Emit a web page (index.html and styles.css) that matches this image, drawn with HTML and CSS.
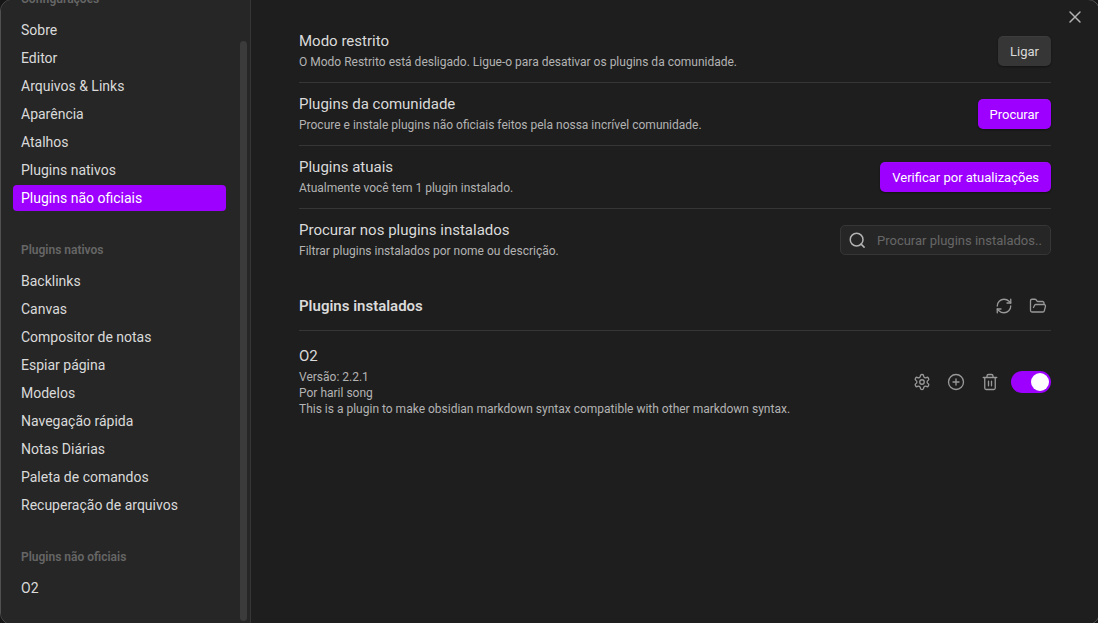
FILE: index.html
```html
<!DOCTYPE html>
<html lang="pt-BR">
<head>
<meta charset="utf-8">
<title>Configurações</title>
<link rel="stylesheet" href="styles.css">
</head>
<body>
<div class="modal">
  <nav class="sidebar">
    <section class="nav-group">
      <h2 class="nav-title">Configurações</h2>
      <a class="nav-item" href="#">Sobre</a>
      <a class="nav-item" href="#">Editor</a>
      <a class="nav-item" href="#">Arquivos &amp; Links</a>
      <a class="nav-item" href="#">Aparência</a>
      <a class="nav-item" href="#">Atalhos</a>
      <a class="nav-item" href="#">Plugins nativos</a>
      <a class="nav-item is-active" href="#" aria-current="page">Plugins não oficiais</a>
    </section>
    <section class="nav-group">
      <h2 class="nav-title">Plugins nativos</h2>
      <a class="nav-item" href="#">Backlinks</a>
      <a class="nav-item" href="#">Canvas</a>
      <a class="nav-item" href="#">Compositor de notas</a>
      <a class="nav-item" href="#">Espiar página</a>
      <a class="nav-item" href="#">Modelos</a>
      <a class="nav-item" href="#">Navegação rápida</a>
      <a class="nav-item" href="#">Notas Diárias</a>
      <a class="nav-item" href="#">Paleta de comandos</a>
      <a class="nav-item" href="#">Recuperação de arquivos</a>
    </section>
    <section class="nav-group">
      <h2 class="nav-title">Plugins não oficiais</h2>
      <a class="nav-item" href="#">O2</a>
    </section>
    <div class="scroll-thumb"></div>
  </nav>

  <main class="content">
    <div class="setting">
      <div class="info">
        <div class="name">Modo restrito</div>
        <div class="desc">O Modo Restrito está desligado. Ligue-o para desativar os plugins da comunidade.</div>
      </div>
      <button class="btn" type="button">Ligar</button>
    </div>
    <div class="setting">
      <div class="info">
        <div class="name">Plugins da comunidade</div>
        <div class="desc">Procure e instale plugins não oficiais feitos pela nossa incrível comunidade.</div>
      </div>
      <button class="btn btn-cta" type="button">Procurar</button>
    </div>
    <div class="setting">
      <div class="info">
        <div class="name">Plugins atuais</div>
        <div class="desc">Atualmente você tem 1 plugin instalado.</div>
      </div>
      <button class="btn btn-cta" type="button">Verificar por atualizações</button>
    </div>
    <div class="setting">
      <div class="info">
        <label class="name" for="search">Procurar nos plugins instalados</label>
        <div class="desc">Filtrar plugins instalados por nome ou descrição.</div>
      </div>
      <div class="search">
        <svg class="icon search-icon" viewBox="0 0 24 24"><circle cx="11.500" cy="11.500" r="8.500"/><path d="m21.500 21.500-4-4"/></svg>
        <input class="search-input" id="search" type="text" placeholder="Procurar plugins instalados...">
      </div>
    </div>

    <div class="heading">
      <h1 class="heading-title">Plugins instalados</h1>
      <div class="controls">
        <button class="icon-btn" type="button" aria-label="Recarregar plugins">
          <svg class="icon" viewBox="0 0 24 24"><path d="M3 12a9 9 0 0 1 9-9 9.75 9.75 0 0 1 6.74 2.74L21 8"/><path d="M21 3v5h-5"/><path d="M21 12a9 9 0 0 1-9 9 9.75 9.75 0 0 1-6.74-2.74L3 16"/><path d="M8 16H3v5"/></svg>
        </button>
        <button class="icon-btn" type="button" aria-label="Abrir pasta de plugins">
          <svg class="icon" viewBox="0 0 24 24"><path d="m6 14 1.45-2.9A2 2 0 0 1 9.24 10H20a2 2 0 0 1 1.94 2.5l-1.55 6a2 2 0 0 1-1.94 1.5H4a2 2 0 0 1-2-2V5c0-1.1.9-2 2-2h3.93a2 2 0 0 1 1.66.9l.82 1.2a2 2 0 0 0 1.66.9H18a2 2 0 0 1 2 2v2"/></svg>
        </button>
      </div>
    </div>

    <div class="setting plugin">
      <div class="info">
        <label class="name" for="o2-enabled">O2</label>
        <div class="desc">
          <div>Versão: 2.2.1</div>
          <div>Por haril song</div>
          <div>This is a plugin to make obsidian markdown syntax compatible with other markdown syntax.</div>
        </div>
      </div>
      <div class="controls">
        <button class="icon-btn" type="button" aria-label="Opções">
          <svg class="icon" viewBox="0 0 24 24"><path d="M12.22 2h-.44a2 2 0 0 0-2 2v.18a2 2 0 0 1-1 1.73l-.43.25a2 2 0 0 1-2 0l-.15-.08a2 2 0 0 0-2.73.73l-.22.38a2 2 0 0 0 .73 2.73l.15.1a2 2 0 0 1 1 1.72v.51a2 2 0 0 1-1 1.74l-.15.09a2 2 0 0 0-.73 2.73l.22.38a2 2 0 0 0 2.73.73l.15-.08a2 2 0 0 1 2 0l.43.25a2 2 0 0 1 1 1.73V20a2 2 0 0 0 2 2h.44a2 2 0 0 0 2-2v-.18a2 2 0 0 1 1-1.73l.43-.25a2 2 0 0 1 2 0l.15.08a2 2 0 0 0 2.73-.73l.22-.39a2 2 0 0 0-.73-2.73l-.15-.08a2 2 0 0 1-1-1.74v-.5a2 2 0 0 1 1-1.74l.15-.09a2 2 0 0 0 .73-2.73l-.22-.38a2 2 0 0 0-2.73-.73l-.15.08a2 2 0 0 1-2 0l-.43-.25a2 2 0 0 1-1-1.73V4a2 2 0 0 0-2-2z"/><circle cx="12" cy="12" r="3"/></svg>
        </button>
        <button class="icon-btn" type="button" aria-label="Atalhos">
          <svg class="icon" viewBox="0 0 24 24"><circle cx="12" cy="12" r="10"/><path d="M8 12h8M12 8v8"/></svg>
        </button>
        <button class="icon-btn" type="button" aria-label="Desinstalar">
          <svg class="icon" viewBox="0 0 24 24"><path d="M3 6h18M19 6v14a2 2 0 0 1-2 2H7a2 2 0 0 1-2-2V6M8 6V4a2 2 0 0 1 2-2h4a2 2 0 0 1 2 2v2M10 11v6M14 11v6"/></svg>
        </button>
        <input class="toggle" id="o2-enabled" type="checkbox" checked>
      </div>
    </div>
  </main>

  <button class="close" type="button" aria-label="Fechar">
    <svg class="icon close-icon" viewBox="0 0 24 24"><path d="M18 6 6 18M6 6l12 12"/></svg>
  </button>
</div>
</body>
</html>
```
FILE: styles.css
```css
* {
  box-sizing: border-box;
}

body {
  margin: 0;
  height: 100vh;
  overflow: hidden;
  background: #161616;
  color: #dadada;
  font-family: Roboto, sans-serif;
}

.modal {
  position: relative;
  display: flex;
  height: calc(100vh + 3px);
  margin: -1px -2px 0 0;
  border: 1px solid #505050;
  border-radius: 12px;
  background: #1e1e1e;
  overflow: hidden;
}

.sidebar {
  position: relative;
  flex: none;
  width: 250px;
  padding: 0 24px 0 12px;
  border-right: 1px solid #363636;
  background: #262626;
  overflow: hidden;
}

.nav-group {
  display: flex;
  flex-direction: column;
  gap: 2px;
  margin-bottom: 31px;
}

.nav-group:first-child {
  margin-top: -9px;
}

.nav-title {
  margin: 0 0 8px;
  padding: 0 8px;
  color: #666666;
  font-size: 12px;
  font-weight: 600;
  line-height: 16px;
}

.nav-item {
  padding: 4px 8px;
  border-radius: 4px;
  color: #dadada;
  font-size: 14px;
  line-height: 18px;
  text-decoration: none;
}

.nav-item.is-active {
  background: #9d00ff;
  color: #ffffff;
}

.scroll-thumb {
  position: absolute;
  top: 41px;
  right: 3px;
  bottom: 3px;
  width: 7px;
  border-radius: 4px;
  background: #3b3b3b;
}

.content {
  flex: 1;
  min-width: 0;
  padding: 20px 48px 0;
}

.setting {
  display: flex;
  align-items: center;
  gap: 16px;
  padding: 12px 0;
  border-top: 1px solid #363636;
}

.setting:first-child {
  border-top: 0;
}

.info {
  flex: 1;
  min-width: 0;
}

.name {
  display: block;
  font-size: 15px;
  line-height: 18px;
}

.desc {
  margin-top: 4px;
  color: #b3b3b3;
  font-size: 12px;
  line-height: 16px;
}

.btn {
  height: 30px;
  padding: 0 12px;
  border: 0;
  border-radius: 5px;
  background: #363636;
  box-shadow: 0 1px 2px rgba(0, 0, 0, 0.4), inset 0 1px 0 rgba(255, 255, 255, 0.04);
  color: #dadada;
  font-family: inherit;
  font-size: 13px;
}

.btn-cta {
  background: #9d00ff;
  color: #ffffff;
}

.search {
  position: relative;
  width: 211px;
}

.search-input {
  display: block;
  width: 100%;
  height: 30px;
  padding: 0 8px 0 36px;
  border: 1px solid #363636;
  border-radius: 5px;
  background: #262626;
  color: #dadada;
  font-family: inherit;
  font-size: 13px;
}

.search-input::placeholder {
  color: #666666;
}

.icon {
  display: block;
  width: 18px;
  height: 18px;
  fill: none;
  stroke: currentColor;
  stroke-width: 1.75;
  stroke-linecap: round;
  stroke-linejoin: round;
}

.search-icon {
  position: absolute;
  top: 6px;
  left: 8px;
  color: #b3b3b3;
  stroke-width: 2;
}

.heading {
  display: flex;
  align-items: center;
  justify-content: space-between;
  margin-top: 10px;
  padding: 12px 0 11px;
}

.heading-title {
  margin: 0;
  font-size: 15px;
  font-weight: 600;
  line-height: 18px;
}

.controls {
  display: flex;
  align-items: center;
  gap: 8px;
}

.icon-btn {
  padding: 4px;
  border: 0;
  background: none;
  color: #999999;
}

.plugin {
  padding: 16px 0;
}

.toggle {
  display: flex;
  align-items: center;
  justify-content: flex-end;
  width: 40px;
  height: 22px;
  margin: 0;
  padding: 2px;
  border-radius: 11px;
  background: #9d00ff;
  appearance: none;
}

.toggle::before {
  content: "";
  width: 18px;
  height: 18px;
  border-radius: 50%;
  background: #ffffff;
}

.close {
  position: absolute;
  top: 3px;
  right: 10px;
  padding: 4px;
  border: 0;
  background: none;
  color: #b3b3b3;
}

.close-icon {
  width: 20px;
  height: 20px;
}
```
